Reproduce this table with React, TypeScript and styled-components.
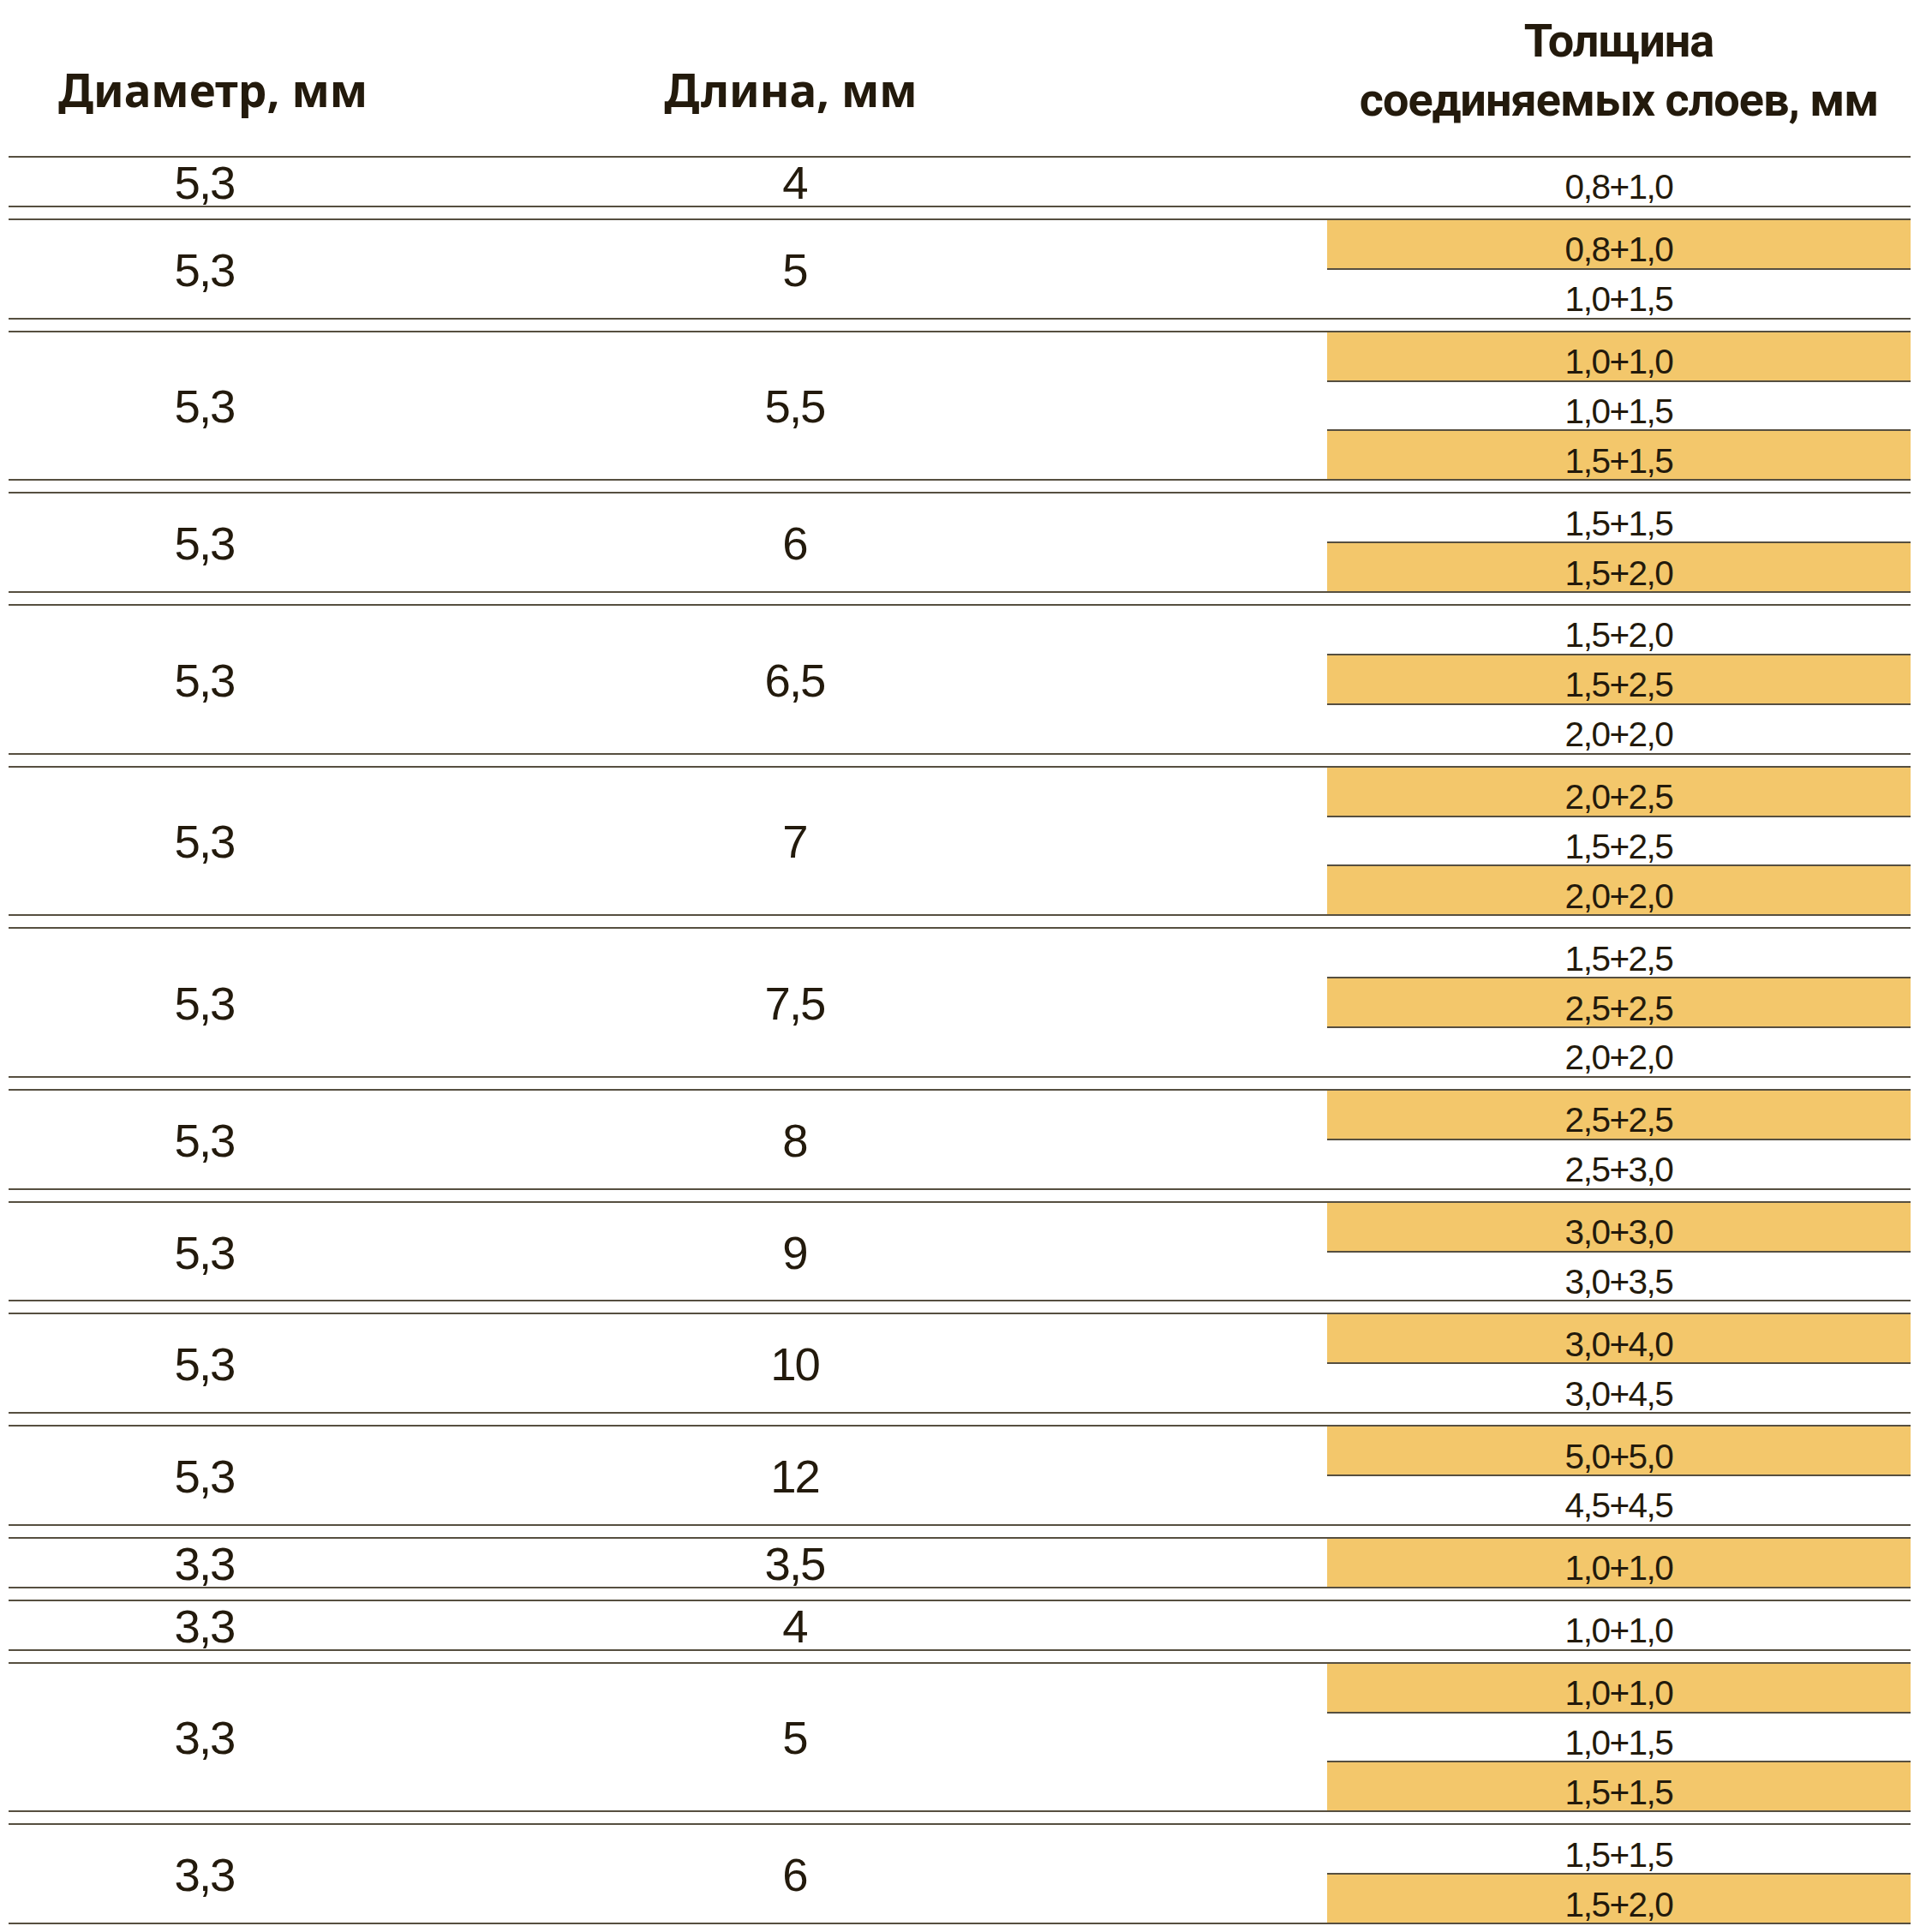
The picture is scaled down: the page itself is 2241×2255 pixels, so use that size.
import styled, { createGlobalStyle } from 'styled-components'

const INK = '#231a0c'
const LINE = '#564f40'
const GOLD = '#f3c76b'
const COLS = '457px 921px 161px 681px'

const GlobalStyle = createGlobalStyle`
  html, body {
    margin: 0;
    padding: 0;
    background: #ffffff;
  }
`

type Layer = [string, boolean]

interface Group {
  diameter: string
  length: string
  layers: Layer[]
}

const groups: Group[] = [
  { diameter: '5,3', length: '4', layers: [['0,8+1,0', false]] },
  { diameter: '5,3', length: '5', layers: [['0,8+1,0', true], ['1,0+1,5', false]] },
  { diameter: '5,3', length: '5,5', layers: [['1,0+1,0', true], ['1,0+1,5', false], ['1,5+1,5', true]] },
  { diameter: '5,3', length: '6', layers: [['1,5+1,5', false], ['1,5+2,0', true]] },
  { diameter: '5,3', length: '6,5', layers: [['1,5+2,0', false], ['1,5+2,5', true], ['2,0+2,0', false]] },
  { diameter: '5,3', length: '7', layers: [['2,0+2,5', true], ['1,5+2,5', false], ['2,0+2,0', true]] },
  { diameter: '5,3', length: '7,5', layers: [['1,5+2,5', false], ['2,5+2,5', true], ['2,0+2,0', false]] },
  { diameter: '5,3', length: '8', layers: [['2,5+2,5', true], ['2,5+3,0', false]] },
  { diameter: '5,3', length: '9', layers: [['3,0+3,0', true], ['3,0+3,5', false]] },
  { diameter: '5,3', length: '10', layers: [['3,0+4,0', true], ['3,0+4,5', false]] },
  { diameter: '5,3', length: '12', layers: [['5,0+5,0', true], ['4,5+4,5', false]] },
  { diameter: '3,3', length: '3,5', layers: [['1,0+1,0', true]] },
  { diameter: '3,3', length: '4', layers: [['1,0+1,0', false]] },
  { diameter: '3,3', length: '5', layers: [['1,0+1,0', true], ['1,0+1,5', false], ['1,5+1,5', true]] },
  { diameter: '3,3', length: '6', layers: [['1,5+1,5', false], ['1,5+2,0', true]] },
]

const Page = styled.main`
  padding: 0 11px 0 10px;
  color: ${INK};
`

const Head = styled.header`
  display: grid;
  grid-template-columns: ${COLS};
  height: 182px;
  box-sizing: border-box;
`

// $offset > 0 pushes the title right, < 0 pushes it left
const HeadTitle = styled.h2<{ $offset?: number }>`
  margin: 0;
  padding-top: 78px;
  padding-left: ${p => Math.max(p.$offset ?? 0, 0)}px;
  padding-right: ${p => Math.max(-(p.$offset ?? 0), 0)}px;
  font-family: 'Noto Sans', 'DejaVu Sans', sans-serif;
  font-weight: 700;
  font-size: 53px;
  line-height: 1;
  text-align: center;
  white-space: nowrap;
`

const HeadTitleWide = styled.h2`
  grid-column: 4;
  margin: 0;
  padding-top: 13px;
  font-family: Roboto, 'Liberation Sans', sans-serif;
  font-weight: 700;
  font-size: 54px;
  line-height: 69px;
  letter-spacing: -1px;
  text-align: center;
  white-space: nowrap;
`

const Body = styled.section`
  display: flex;
  flex-direction: column;
  gap: 13px;
`

const Row = styled.div`
  display: grid;
  grid-template-columns: ${COLS};
  border-top: 2px solid ${LINE};
  border-bottom: 2px solid ${LINE};
`

const Value = styled.div`
  display: flex;
  align-items: center;
  justify-content: center;
  padding-top: 4px;
  font-family: 'Liberation Sans', Arial, sans-serif;
  font-size: 54.5px;
  letter-spacing: -2px;
  line-height: 40px;
`

const Layers = styled.div`
  grid-column: 4;
  display: flex;
  flex-direction: column;
  gap: 2px;
`

const LayerCell = styled.div<{ $hl: boolean }>`
  height: 55.875px;
  display: flex;
  align-items: flex-end;
  justify-content: center;
  padding-bottom: 1px;
  box-sizing: border-box;
  font-family: 'Liberation Sans', Arial, sans-serif;
  font-size: 40.5px;
  letter-spacing: -1.5px;
  line-height: 1;
  background: ${p => (p.$hl ? GOLD : 'transparent')};
  box-shadow: ${p => (p.$hl ? `0 -2px 0 ${LINE}, 0 2px 0 ${LINE}` : 'none')};
`

export default function App() {
  return (
    <Page>
      <GlobalStyle />
      <Head>
        <HeadTitle $offset={20}>Диаметр, мм</HeadTitle>
        <HeadTitle $offset={-9}>Длина, мм</HeadTitle>
        <HeadTitleWide>
          Толщина
          <br />
          соединяемых слоев, мм
        </HeadTitleWide>
      </Head>
      <Body>
        {groups.map((g, i) => (
          <Row key={i}>
            <Value>{g.diameter}</Value>
            <Value>{g.length}</Value>
            <Layers>
              {g.layers.map(([text, hl], j) => (
                <LayerCell key={j} $hl={hl}>
                  {text}
                </LayerCell>
              ))}
            </Layers>
          </Row>
        ))}
      </Body>
    </Page>
  )
}
